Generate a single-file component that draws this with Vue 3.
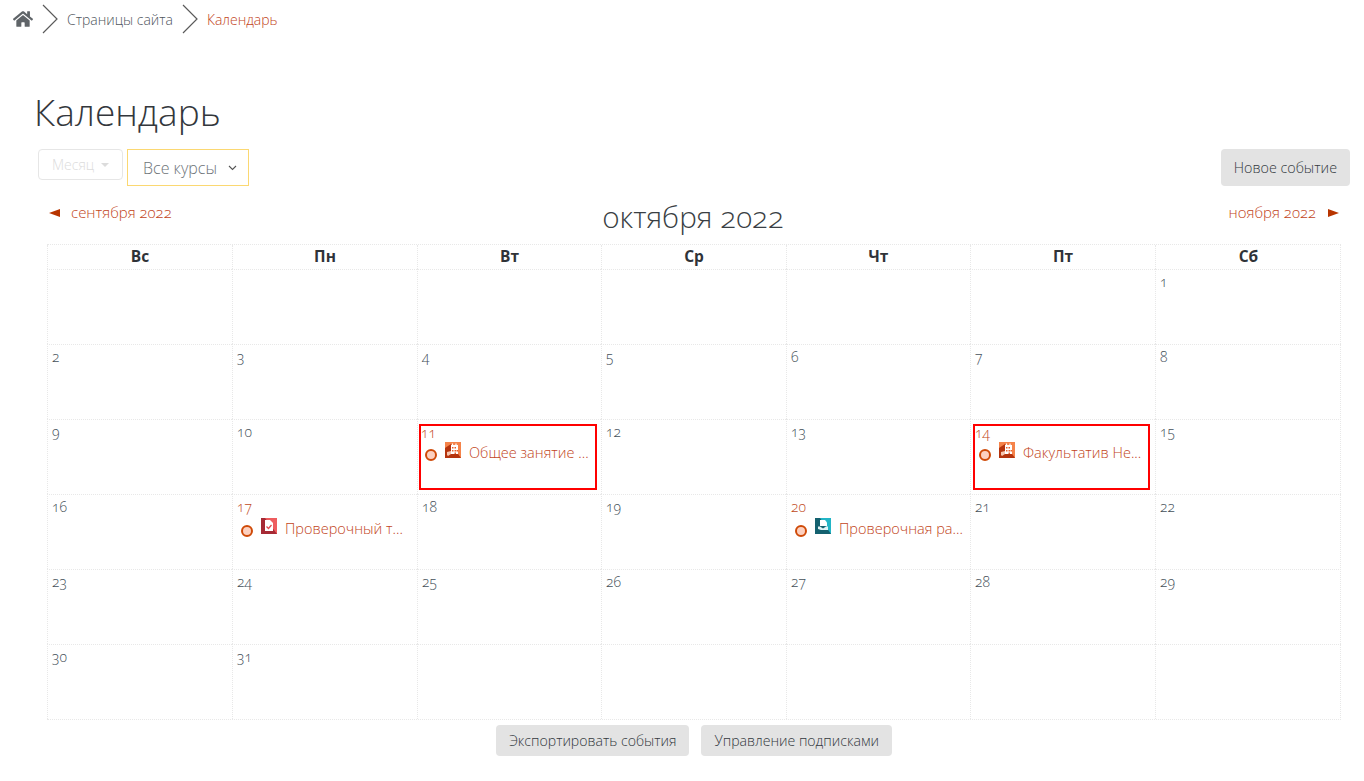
<script setup>
const heads = ['Вс', 'Пн', 'Вт', 'Ср', 'Чт', 'Пт', 'Сб']
const ev = {
  11: { t: 'Общее занятие ...', k: 'cal', box: true },
  14: { t: 'Факультатив Не...', k: 'cal', box: true, inset: true },
  17: { t: 'Проверочный т...', k: 'quiz' },
  20: { t: 'Проверочная ра...', k: 'assign' }
}
const cells = []
for (let i = 0; i < 6; i++) cells.push({ d: null })
for (let d = 1; d <= 31; d++) cells.push({ d, e: ev[d] })
while (cells.length < 42) cells.push({ d: null })
</script>

<template>
  <div class="page">
    <nav class="crumbs">
      <svg class="home" viewBox="0 0 576 512" width="20" height="18" aria-hidden="true"><path fill="#5f6468" d="M280 148 96 300v164c0 9 7 16 16 16l112-.3c9 0 16-7 16-16V368c0-9 7-16 16-16h64c9 0 16 7 16 16v95.6c0 9 7 16 16 16l112 .4c9 0 16-7 16-16V300L296 148c-4.600-3.700-11.400-3.700-16 0zM572 251l-84-69V44c0-6.600-5.400-12-12-12h-56c-6.600 0-12 5.400-12 12v72l-89.500-73.700c-17.700-14.600-43.300-14.600-61 0L4.300 251c-5.100 4.200-5.800 11.800-1.600 16.900l25.500 31c4.200 5.100 11.800 5.800 16.900 1.600L280 107c4.600-3.700 11.400-3.700 16 0l235 193.500c5.100 4.200 12.700 3.500 16.900-1.600l25.500-31c4.200-5.200 3.400-12.800-1.400-16.900z"/></svg>
      <svg class="sep" viewBox="0 0 16 30" width="16" height="30" aria-hidden="true"><path d="M1 1l14 14L1 29" fill="none" stroke="#5a5a5a" stroke-width="1.200"/></svg>
      <a class="crumb">Страницы сайта</a>
      <svg class="sep" viewBox="0 0 16 30" width="16" height="30" aria-hidden="true"><path d="M1 1l14 14L1 29" fill="none" stroke="#5a5a5a" stroke-width="1.200"/></svg>
      <a class="crumb current">Календарь</a>
    </nav>

    <h1 class="title">Календарь</h1>

    <div class="toolbar">
      <div class="filters">
        <span class="month">Месяц<i class="caret"></i></span>
        <span class="courses">Все курсы
          <svg width="9" height="6" viewBox="0 0 9 6" aria-hidden="true"><path d="M1 1l3.500 3.500L8 1" fill="none" stroke="#555" stroke-width="1.100"/></svg>
        </span>
      </div>
      <button class="btn">Новое событие</button>
    </div>

    <div class="monthnav">
      <a class="prev"><i class="arr left"></i>сентября 2022</a>
      <div class="cur">октября 2022</div>
      <a class="next">ноября 2022<i class="arr right"></i></a>
    </div>

    <div class="grid">
      <div v-for="h in heads" :key="h" class="head">{{ h }}</div>
      <div v-for="(c, i) in cells" :key="i" class="cell">
        <div :class="['inner', { boxed: c.e && c.e.box, inset: c.e && c.e.inset }]">
          <span v-if="c.d" :class="['num', { has: c.e }]">{{ c.d }}</span>
          <div v-if="c.e" class="event">
            <i class="dot"></i>
            <svg class="ico" viewBox="0 0 16 16" width="16" height="16" aria-hidden="true">
              <template v-if="c.e.k === 'cal'">
                <rect width="16" height="16" fill="#f5834a"/>
                <path d="M0 6l6-4 10 14H0z" fill="#b5340e"/>
                <path d="M6 3h7v9H6z" fill="#fff"/>
                <path d="M7.500 1.500v2M11 1.500v2" stroke="#fff" stroke-width="1.200"/>
                <path d="M7 5h1.500v1.500H7zM9.500 5H11v1.500H9.500zM7 8h1.500v1.500H7zM9.500 8H11v1.500H9.500zM11.500 8H13v1.500h-1.500zM9.500 10.500H11V12H9.500z" fill="#e8602c"/>
                <path d="M2 10l4-1v3l-3 2-1-1z" fill="#f7c5ae"/>
              </template>
              <template v-else-if="c.e.k === 'quiz'">
                <rect width="16" height="16" fill="#ee5c5e"/>
                <path d="M0 0h4l12 16H0z" fill="#a62a35"/>
                <path d="M4 2h5l3 3v8H4z" fill="#fff"/>
                <path d="M5.500 8.500l2 2L10.500 7" fill="none" stroke="#e04a50" stroke-width="1.300"/>
              </template>
              <template v-else>
                <rect width="16" height="16" fill="#22b5c6"/>
                <path d="M0 0h5l11 16H0z" fill="#14616f"/>
                <path d="M5 2h5l2 2.500V8H5z" fill="#fff"/>
                <path d="M3 8.500h2l3 2 3-2h2V12H6l-3-1z" fill="#dff3f6"/>
              </template>
            </svg>
            <a class="etitle">{{ c.e.t }}</a>
          </div>
        </div>
      </div>
    </div>

    <div class="footer">
      <button class="btn">Экспортировать события</button>
      <button class="btn">Управление подписками</button>
    </div>
  </div>
</template>

<style>
html, body { margin: 0; background: #fff; }
</style>

<style scoped>
.page {
  width: 1364px;
  height: 781px;
  overflow: hidden;
  box-sizing: border-box;
  font-family: "Open Sans", "Noto Sans", sans-serif;
  font-weight: 300;
  color: #3a3f45;
  font-variant-numeric: oldstyle-nums;
}
.crumbs { display: flex; align-items: center; height: 30px; padding: 4px 0 0 13px; font-size: 14px; }
.home { margin-right: 9px; }
.sep { margin-right: 9px; }
.crumb { color: #4f565d; margin-right: 9px; }
.crumb.current { color: #c2451b; }
.title { margin: 56px 0 0 34px; font-size: 37px; line-height: 44px; font-weight: 300; color: #33373c; }
.toolbar { display: flex; justify-content: space-between; align-items: flex-start; margin: 15px 14px 0 38px; }
.filters { display: flex; align-items: flex-start; gap: 4px; }
.month {
  display: flex; align-items: center; width: 85px; height: 31px; box-sizing: border-box; padding-left: 13px;
  border: 1px solid #e6e6e6; border-radius: 4px; color: #dcdcdc; font-size: 14px;
}
.caret { display: inline-block; margin-left: 7px; border: 4px solid transparent; border-top-color: #dcdcdc; border-bottom: 0; }
.courses {
  display: flex; align-items: center; justify-content: space-between; width: 122px; height: 37px; box-sizing: border-box;
  padding: 0 11px 0 15px; border: 1px solid #fbd872; color: #6d7378; font-size: 16px;
}
.btn {
  border: 0; border-radius: 4px; background: #e3e3e3; color: #33393e;
  font: 300 14.3px "Open Sans", "Noto Sans", sans-serif; padding: 0 13px; height: 37px;
}
.monthnav { display: flex; justify-content: space-between; margin: 0 25px 0 47px; height: 58px; position: relative; }
.monthnav a { color: #c2451b; font-size: 15px; padding-top: 17px; line-height: 18px; }
.prev { display: flex; align-items: flex-start; }
.next { display: flex; align-items: flex-start; }
.arr { width: 0; height: 0; margin-top: 6px; border-top: 4px solid transparent; border-bottom: 4px solid transparent; }
.arr.left { border-right: 11px solid #b83500; margin: 6px 11px 0 2px; }
.arr.right { border-left: 11px solid #b83500; margin: 6px 0 0 12px; }
.cur { position: absolute; left: 0; right: 0; top: 14px; text-align: center; font-size: 29.700px; line-height: 34px; color: #3a3f44; }
.grid {
  display: grid;
  grid-template-columns: 185px 185px 184px 185px 184px 185px 186px;
  grid-template-rows: 24px repeat(6, 75px);
  margin-left: 47px;
  width: 1294px;
  box-sizing: border-box;
  border-right: 1px dotted #e8e8e8;
  border-bottom: 1px dotted #e8e8e8;
  border-top: 1px dotted #e8e8e8;
}
.head, .cell { border-left: 1px dotted #e8e8e8; box-sizing: border-box; }
.head { text-align: center; font-weight: 700; font-size: 15.5px; line-height: 23px; color: #2f3338; }
.cell { border-top: 1px dotted #e8e8e8; padding: 4px 4px 4px 1px; min-width: 0; }
.inner { height: 66px; padding: 0 0 0 3px; box-sizing: border-box; }
.inner.boxed { border: 2px solid #f00; padding: 0; }
.inner.inset { margin: 0 1px; }
.num { font-size: 14px; line-height: 15px; display: block; color: #445059; }
.num.has { color: #bf4a22; }
.boxed .num { line-height: 13px; }
.event { display: flex; align-items: flex-start; margin-top: 3px; padding-left: 4px; }
.inner:not(.boxed) .event { margin-top: 4px; }
.dot { flex: none; width: 12px; height: 12px; margin: 7px 6px 0 0; box-sizing: border-box; border: 2px solid #cf4a08; border-radius: 50%; background: #fdd0bf; }
.ico { flex: none; margin: 0 8px 0 2px; }
.etitle { color: #c2451b; font-size: 14.5px; line-height: 22px; white-space: nowrap; }
.footer { display: flex; justify-content: center; gap: 12px; margin: 5px 0 0 47px; width: 1294px; }
.footer .btn { height: 31px; font-size: 14.1px; }
</style>
